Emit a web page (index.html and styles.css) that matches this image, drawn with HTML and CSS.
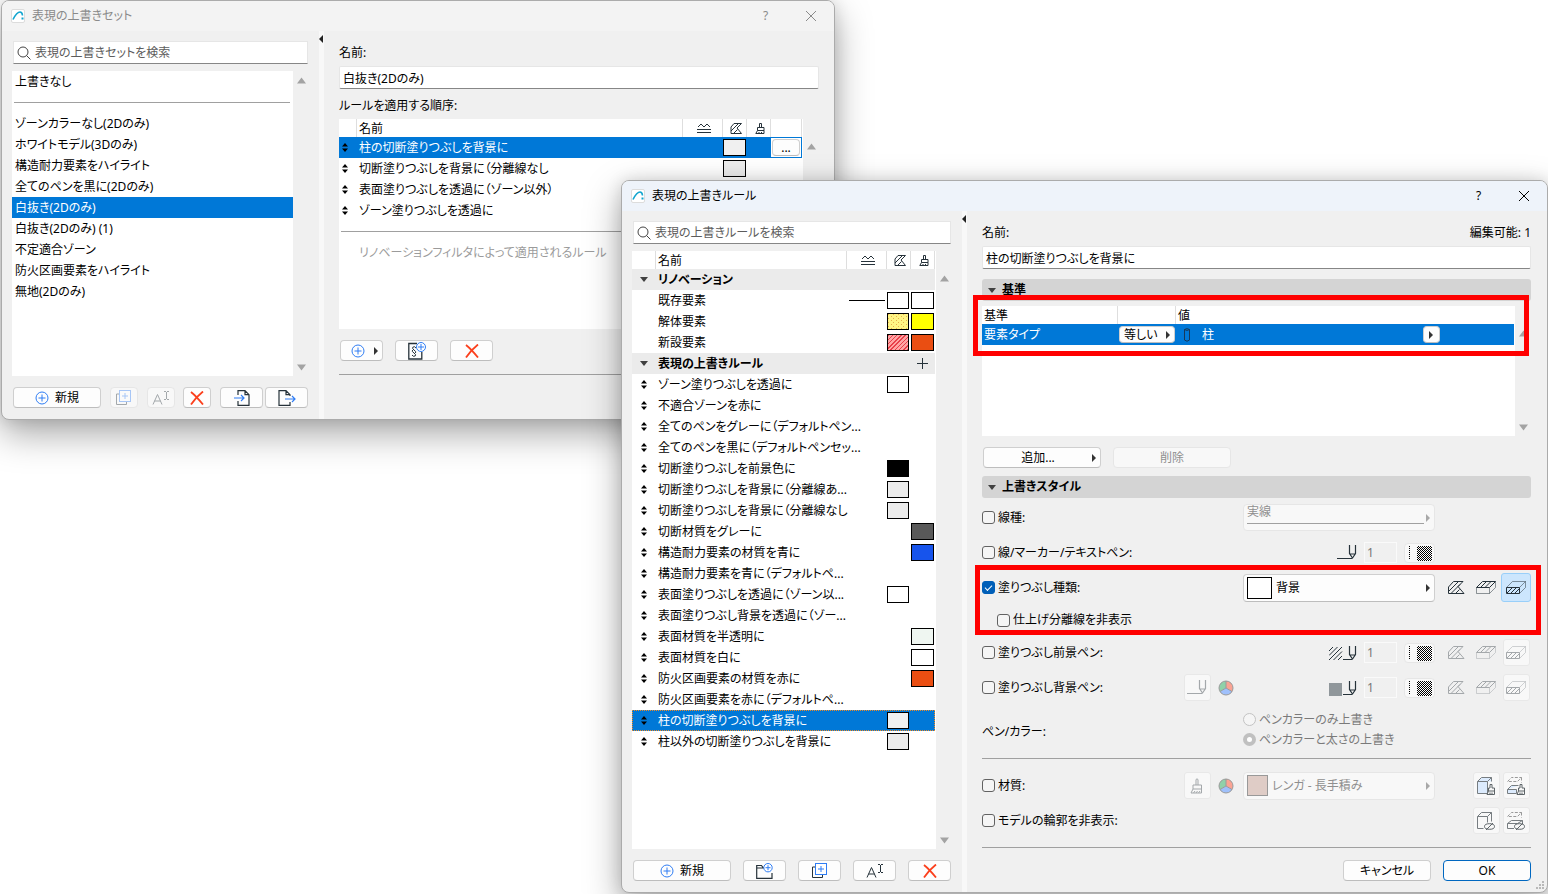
FILE: index.html
```html
<!DOCTYPE html>
<html lang="ja">
<head>
    <meta charset="UTF-8">
    <meta name="viewport" content="width=device-width, initial-scale=1.0">
    <title>表現の上書き</title>
    <link rel="stylesheet" href="styles.css">
</head>
<body>

    <!-- shared icons -->
    <svg class="sprite" aria-hidden="true">
        <defs>
            <pattern id="dots" width="5" height="4" patternUnits="userSpaceOnUse">
                <rect width="5" height="4" fill="#fff584"/>
                <path d="M0 0h1v1h-1zM3 2h1v1h-1z" fill="#eab04c"/>
            </pattern>
            <pattern id="check" width="2" height="2" patternUnits="userSpaceOnUse">
                <rect width="2" height="2" fill="#fff"/>
                <path d="M0 0h1v1h-1zM1 1h1v1h-1z" fill="#000"/>
            </pattern>
        </defs>
        <symbol id="logo" viewBox="0 0 14 14">
            <rect x=".5" y=".5" width="13" height="13" rx="1.5" fill="#fff" stroke="#dcdcdc"/>
            <path d="M2 10.500C4 6.500 6.500 3 9 3C10.500 3 11.300 4.500 11.500 6.500" fill="none" stroke="#12a5cf" stroke-width="1.600"/>
            <rect x="10.500" y="8.500" width="2" height="2" fill="#12a5cf"/>
        </symbol>
        <symbol id="close" viewBox="0 0 12 12"><path d="M1 1l10 10M11 1L1 11" fill="none" stroke="currentColor"/></symbol>
        <symbol id="search" viewBox="0 0 14 14"><circle cx="6" cy="6" r="5" fill="none" stroke="#444"/><path d="M9.500 9.500l4 4" stroke="#444"/></symbol>
        <symbol id="sort" viewBox="0 0 6 9"><path d="M0 3.500L3 0l3 3.500zM0 5.500L3 9l3-3.500z"/></symbol>
        <symbol id="up" viewBox="0 0 9 7"><path d="M0 6.500L4.500 .5 9 6.500z" fill="#a3a3a3"/></symbol>
        <symbol id="down" viewBox="0 0 9 7"><path d="M0 .5L4.500 6.500 9 .5z" fill="#a3a3a3"/></symbol>
        <symbol id="open" viewBox="0 0 8 5"><path d="M0 0h8L4 5z" fill="#404040"/></symbol>
        <symbol id="right" viewBox="0 0 4 8"><path d="M0 0l4 4-4 4z" fill="currentColor"/></symbol>
        <symbol id="left" viewBox="0 0 4 8"><path d="M4 0L0 4l4 4z" fill="#222"/></symbol>
        <symbol id="lines" viewBox="0 0 14 10"><path d="M1 4l3-3 3 3 3-3 3 3" fill="none" stroke="#26323a"/><path d="M0 6.500h14M0 9.500h14" stroke="#26323a"/></symbol>
        <symbol id="fill" viewBox="0 0 12 11"><path d="M1 10.500V4l3-3.500h7.500L7 5l4.500 5.500zM1 8l7-7M3.500 10.500l4-4" fill="none" stroke="#26323a"/></symbol>
        <symbol id="brush" viewBox="0 0 14 16"><path d="M6 7V1.500Q7 .2 8 1.500V7M3 7h8.500v4H3zM3 11l-2 4h10.500V11M3.500 15l1.500-2M6 15l1.500-2M8.500 15l1.500-2" fill="none" stroke="currentColor"/></symbol>
        <symbol id="brush-head" viewBox="0 0 10 11"><path d="M4.500 4.500V.5h2v4M2.500 4.500h6.500v3H2.500zM2.500 7.500L.8 10.500H9V7.500M4 10.500V9M6.500 10.500V9" fill="none" stroke="#26323a"/></symbol>
        <symbol id="plus" viewBox="0 0 14 14"><circle cx="7" cy="7" r="6" fill="none" stroke="#2f7df4"/><path d="M3.500 7h7M7 3.500v7" stroke="#2f7df4"/></symbol>
        <symbol id="copy" viewBox="0 0 15 15"><path d="M3 4H.5v10.500h10V12" fill="none" stroke="#26323a"/><rect x="3.500" y=".5" width="11" height="11" fill="#fff" stroke="#2f7df4"/><path d="M6 6h6M9 3v6" stroke="#2f7df4"/></symbol>
        <symbol id="rename" viewBox="0 0 17 14"><path d="M1 13.500L5.500 3.500 10 13.500M2.500 10h6M12 .5h2M15 .5h2M14.500 1v7M12 8.500h2M15 8.500h2" fill="none" stroke="#26323a"/></symbol>
        <symbol id="delete" viewBox="0 0 14 14"><path d="M1 1Q6 5 13 13.500M13 .5Q6 6 1 13.500" fill="none" stroke="#fb3f1c" stroke-width="1.800"/></symbol>
        <symbol id="import" viewBox="0 0 16 16"><path d="M4 5V.7h7L15 4.700v10.600H4V11M11 .7v4h4" fill="none" stroke="#26323a" stroke-width="1.200"/><path d="M0 8h10M7 5l3 3-3 3" fill="none" stroke="#2f7df4" stroke-width="1.200"/></symbol>
        <symbol id="export" viewBox="0 0 18 16"><path d="M12 6V4.700L8 .7H1v14.600h11V12M8 .7v4h4" fill="none" stroke="#26323a" stroke-width="1.200"/><path d="M7 9h10M14 6l3 3-3 3" fill="none" stroke="#2f7df4" stroke-width="1.200"/></symbol>
        <symbol id="section" viewBox="0 0 18 18"><path d="M9 1.500H.8v15.500h13V10" fill="none" stroke="#26323a" stroke-width="1.300"/><path d="M8 6Q6.500 3.800 4.800 5.200Q4 6.800 6 8Q8.500 9.500 7.500 11M4.500 8Q3.500 9.500 6 11Q8.500 12.500 7.200 14Q5 15 4 13" fill="none" stroke="#26323a"/><circle cx="13" cy="5" r="4.500" fill="#fff" stroke="#2f7df4"/><path d="M10 5h6M13 2v6" stroke="#2f7df4"/></symbol>
        <symbol id="folder" viewBox="0 0 17 16"><path d="M8 4.500H7L5.500 2.500H.7v12.800H16V10M.7 5H8" fill="none" stroke="#26323a" stroke-width="1.200"/><circle cx="12" cy="4.700" r="4.200" fill="#fff" stroke="#2f7df4"/><path d="M9.500 4.700h5M12 2.200v5" stroke="#2f7df4"/></symbol>
        <symbol id="add" viewBox="0 0 11 11"><path d="M0 5.500h11M5.500 0v11" stroke="#26323a"/></symbol>
        <symbol id="column" viewBox="0 0 6 14"><path d="M.5 1.500v10.500Q3 14.500 5.500 12V1.500Q3 -.2 .5 1.500Q3 3.500 5.500 1.500" fill="none" stroke="#17395a"/></symbol>
        <symbol id="pen" viewBox="0 0 20 15"><path d="M0 13.500h15M12.500 0v8.500L15.500 13l3-4.500V0M12.500 9h6" fill="none" stroke="currentColor" stroke-width="1.200"/></symbol>
        <symbol id="hatchpen" viewBox="0 0 28 16"><path d="M0 6l4-4M0 10.500L8.500 2M0 15L13 2M4.500 15L13 6.500M9 15l4-4" stroke="#26323a"/><path d="M14 14.500h9M20.500 1v8.500L23.500 14l3-4.500V1M20.500 10h6" fill="none" stroke="#26323a" stroke-width="1.200"/></symbol>
        <symbol id="solidpen" viewBox="0 0 28 16"><rect y="3" width="13" height="13" fill="#90979b"/><path d="M14 14.500h9M20.500 1v8.500L23.500 14l3-4.500V1M20.500 10h6" fill="none" stroke="#26323a" stroke-width="1.200"/></symbol>
        <symbol id="penset" viewBox="0 0 26 16"><path d="M2.500 1v14" stroke="#000" stroke-dasharray="1 1"/><rect x="10" y="1" width="15" height="15" fill="url(#check)"/></symbol>
        <symbol id="cutfill" viewBox="0 0 17 13"><path d="M.5 12.500V6l5-5.500H15L10 5.500l6 7zM.5 10.500l10-10M3 12.500l9-9M7.500 12.500l4-4" fill="none" stroke="currentColor"/></symbol>
        <symbol id="topfill" viewBox="0 0 20 13"><path d="M.5 6.500v6h13v-6M13.500 12.500l6-6v-6" fill="none" stroke="currentColor" opacity=".5"/><path d="M.5 6.500l6-6h13l-6 6zM4.500 6.500l6-6M9 6.500l6-6" fill="none" stroke="currentColor"/></symbol>
        <symbol id="frontfill" viewBox="0 0 20 13"><path d="M.5 6.500l6-6h13l-6 6M13.500 12.500l6-6v-6" fill="none" stroke="currentColor" opacity=".5"/><path d="M.5 6.500h13v6H.5zM1 12l5-5M5 12l5-5M9 12l4-4" fill="none" stroke="currentColor"/></symbol>
        <symbol id="wheel" viewBox="0 0 16 16"><path d="M8 8V1A7 7 0 0 0 2 11.500z" fill="#8fd1a9"/><path d="M8 8V1A7 7 0 0 1 14 11.500z" fill="#fba393"/><path d="M8 8L2 11.500A7 7 0 0 0 14 11.500z" fill="#9fc0fb"/><path d="M8 8V1M8 8L2 11.500M8 8l6 3.500" stroke="#9a9a9a"/><circle cx="8" cy="8" r="7" fill="none" stroke="#9a9a9a"/></symbol>
        <symbol id="boxbrush" viewBox="0 0 18 18"><path d="M.5 4.500l4-4h10v4M14.500 .5l-4 4H.5v12h10v-12" fill="#dcebfd" stroke="#777d81"/><path d="M13 11V7.500h2V11h2.500v3h-6v-3zM11.500 14l-1.500 3.500h7.500V14M13 17v-1.500M15 17v-1.500" fill="#f7f7f7" stroke="#5d6468"/></symbol>
        <symbol id="slabbrush" viewBox="0 0 18 18"><path d="M.5 4.500l4-4h10l-4 4zM14.500 .5v5" fill="none" stroke="#999" stroke-dasharray="3 1.500"/><path d="M.5 12.500l4-4h7M.5 12.500v4h9v-4z" fill="#dcebfd" stroke="#777d81"/><path d="M13 11V7.500h2V11h2.500v3h-6v-3zM11.500 14l-1.500 3.500h7.500V14M13 17v-1.500M15 17v-1.500" fill="#f7f7f7" stroke="#5d6468"/></symbol>
        <symbol id="boxhide" viewBox="0 0 18 18"><path d="M.5 4.500l4-4h10v9M14.500 .5l-4 4H.5v12h6M10.500 4.500v6" fill="none" stroke="#777d81"/><ellipse cx="12.500" cy="14.500" rx="5" ry="2.800" fill="none" stroke="#5d6468"/><path d="M9 18l7-7" stroke="#5d6468"/></symbol>
        <symbol id="slabhide" viewBox="0 0 18 18"><path d="M.5 4.500l4-4h10l-4 4zM14.500 .5v5" fill="none" stroke="#999" stroke-dasharray="3 1.500"/><path d="M7 16.500H.5v-5l4-3h11v3M.5 11.500h10l5-3" fill="none" stroke="#777d81"/><ellipse cx="12.500" cy="14.500" rx="5" ry="2.800" fill="none" stroke="#5d6468"/><path d="M9 18l7-7" stroke="#5d6468"/></symbol>
        <symbol id="grip" viewBox="0 0 8 8"><path d="M6 0h2v2H6zM3 3h2v2H3zM6 3h2v2H6zM0 6h2v2H0zM3 6h2v2H3zM6 6h2v2H6z" fill="#b8b8b8"/></symbol>
    </svg>

    <!-- override sets -->
    <div class="window window-sets">
        <div class="titlebar">
            <svg class="logo"><use href="#logo"/></svg>
            <span class="title">表現の上書きセット</span>
            <button class="title-btn" aria-label="ヘルプ">?</button>
            <button class="title-btn" aria-label="閉じる"><svg width="12" height="12"><use href="#close"/></svg></button>
        </div>
        <div class="window-body">
            <div class="left-pane">
                <label class="search">
                    <svg width="14" height="14"><use href="#search"/></svg>
                    <input type="text" placeholder="表現の上書きセットを検索" aria-label="検索">
                </label>
                <div class="list-area">
                    <ul class="list">
                        <li>上書きなし</li>
                        <li class="separator"><hr></li>
                        <li>ゾーンカラーなし(2Dのみ)</li>
                        <li>ホワイトモデル(3Dのみ)</li>
                        <li>構造耐力要素をハイライト</li>
                        <li>全てのペンを黒に(2Dのみ)</li>
                        <li class="selected">白抜き(2Dのみ)</li>
                        <li>白抜き(2Dのみ) (1)</li>
                        <li>不定適合ゾーン</li>
                        <li>防火区画要素をハイライト</li>
                        <li>無地(2Dのみ)</li>
                    </ul>
                    <div class="scroll">
                        <svg width="9" height="7"><use href="#up"/></svg>
                        <svg width="9" height="7"><use href="#down"/></svg>
                    </div>
                </div>
                <div class="buttons sets-buttons">
                    <button class="btn wide"><svg width="14" height="14"><use href="#plus"/></svg>新規</button>
                    <button class="btn small" disabled aria-label="複製"><svg width="15" height="15"><use href="#copy"/></svg></button>
                    <button class="btn small" disabled aria-label="名前の変更"><svg width="17" height="14"><use href="#rename"/></svg></button>
                    <button class="btn small" aria-label="削除"><svg width="14" height="14"><use href="#delete"/></svg></button>
                    <div class="pair">
                        <button class="btn" aria-label="読み込み"><svg width="16" height="16"><use href="#import"/></svg></button>
                        <button class="btn" aria-label="書き出し"><svg width="18" height="16"><use href="#export"/></svg></button>
                    </div>
                </div>
            </div>
            <div class="splitter"><svg width="4" height="8"><use href="#left"/></svg></div>
            <div class="right-pane">
                <label class="field-label" for="set-name">名前:</label>
                <input class="text-input" type="text" id="set-name" value="白抜き(2Dのみ)">
                <div class="order-label">ルールを適用する順序:</div>
                <div class="list-area">
                    <div class="list">
                        <table class="rules order">
                            <thead>
                                <tr>
                                    <th class="c-sort"></th>
                                    <th class="c-name">名前</th>
                                    <th class="c-line"><svg width="14" height="10"><use href="#lines"/></svg></th>
                                    <th class="c-fill"><svg width="12" height="11"><use href="#fill"/></svg></th>
                                    <th class="c-mat"><svg width="10" height="11"><use href="#brush-head"/></svg></th>
                                    <th class="c-more"></th>
                                </tr>
                            </thead>
                            <tbody>
                                <tr class="selected"><td><svg class="sort"><use href="#sort"/></svg></td><td>柱の切断塗りつぶしを背景に</td><td></td><td><i class="swatch sw-bg"></i></td><td></td><td class="more"><button class="btn">...</button></td></tr>
                                <tr><td><svg class="sort"><use href="#sort"/></svg></td><td>切断塗りつぶしを背景に（分離線なし</td><td></td><td><i class="swatch sw-gray"></i></td><td></td><td></td></tr>
                                <tr><td><svg class="sort"><use href="#sort"/></svg></td><td>表面塗りつぶしを透過に（ゾーン以外）</td><td></td><td></td><td></td><td></td></tr>
                                <tr><td><svg class="sort"><use href="#sort"/></svg></td><td>ゾーン塗りつぶしを透過に</td><td></td><td></td><td></td><td></td></tr>
                                <tr class="separator"><td colspan="6"><hr></td></tr>
                                <tr class="muted"><td></td><td colspan="5">リノベーションフィルタによって適用されるルール</td></tr>
                            </tbody>
                        </table>
                    </div>
                    <div class="scroll below-head">
                        <svg width="9" height="7"><use href="#up"/></svg>
                    </div>
                </div>
                <div class="buttons">
                    <button class="btn has-arrow" aria-label="追加"><svg width="14" height="14"><use href="#plus"/></svg><svg class="arrow"><use href="#right"/></svg></button>
                    <button class="btn" aria-label="条件を追加"><svg width="18" height="18"><use href="#section"/></svg></button>
                    <button class="btn" aria-label="削除"><svg width="14" height="14"><use href="#delete"/></svg></button>
                </div>
                <hr class="rule-line">
            </div>
        </div>
    </div>

    <!-- override rules -->
    <div class="window window-rules active">
        <div class="titlebar">
            <svg class="logo"><use href="#logo"/></svg>
            <span class="title">表現の上書きルール</span>
            <button class="title-btn" aria-label="ヘルプ">?</button>
            <button class="title-btn" aria-label="閉じる"><svg width="12" height="12"><use href="#close"/></svg></button>
        </div>
        <div class="window-body">
            <div class="left-pane">
                <label class="search">
                    <svg width="14" height="14"><use href="#search"/></svg>
                    <input type="text" placeholder="表現の上書きルールを検索" aria-label="検索">
                </label>
                <div class="list-area">
                    <div class="list">
                        <table class="rules">
                            <thead>
                                <tr>
                                    <th class="c-sort"></th>
                                    <th class="c-name">名前</th>
                                    <th class="c-line"><svg width="14" height="10"><use href="#lines"/></svg></th>
                                    <th class="c-fill"><svg width="12" height="11"><use href="#fill"/></svg></th>
                                    <th class="c-mat"><svg width="10" height="11"><use href="#brush-head"/></svg></th>
                                </tr>
                            </thead>
                            <tbody>
                                <tr class="group"><td><svg class="open"><use href="#open"/></svg></td><td colspan="4">リノベーション</td></tr>
                                <tr><td></td><td>既存要素</td><td><i class="line-sample"></i></td><td><i class="swatch"></i></td><td><i class="swatch"></i></td></tr>
                                <tr><td></td><td>解体要素</td><td></td><td><svg class="swatch"><rect width="100%" height="100%" fill="url(#dots)"/></svg></td><td><i class="swatch sw-yellow"></i></td></tr>
                                <tr><td></td><td>新設要素</td><td></td><td><i class="swatch sw-hatch"></i></td><td><i class="swatch sw-orange"></i></td></tr>
                                <tr class="group"><td><svg class="open"><use href="#open"/></svg></td><td colspan="3">表現の上書きルール</td><td class="add"><button aria-label="ルールを追加"><svg width="11" height="11"><use href="#add"/></svg></button></td></tr>
                                <tr><td><svg class="sort"><use href="#sort"/></svg></td><td>ゾーン塗りつぶしを透過に</td><td></td><td><i class="swatch"></i></td><td></td></tr>
                                <tr><td><svg class="sort"><use href="#sort"/></svg></td><td>不適合ゾーンを赤に</td><td></td><td></td><td></td></tr>
                                <tr><td><svg class="sort"><use href="#sort"/></svg></td><td>全てのペンをグレーに（デフォルトペン...</td><td></td><td></td><td></td></tr>
                                <tr><td><svg class="sort"><use href="#sort"/></svg></td><td>全てのペンを黒に（デフォルトペンセッ...</td><td></td><td></td><td></td></tr>
                                <tr><td><svg class="sort"><use href="#sort"/></svg></td><td>切断塗りつぶしを前景色に</td><td></td><td><i class="swatch sw-black"></i></td><td></td></tr>
                                <tr><td><svg class="sort"><use href="#sort"/></svg></td><td>切断塗りつぶしを背景に（分離線あ...</td><td></td><td><i class="swatch sw-gray"></i></td><td></td></tr>
                                <tr><td><svg class="sort"><use href="#sort"/></svg></td><td>切断塗りつぶしを背景に（分離線なし</td><td></td><td><i class="swatch sw-gray"></i></td><td></td></tr>
                                <tr><td><svg class="sort"><use href="#sort"/></svg></td><td>切断材質をグレーに</td><td></td><td></td><td><i class="swatch sw-dark"></i></td></tr>
                                <tr><td><svg class="sort"><use href="#sort"/></svg></td><td>構造耐力要素の材質を青に</td><td></td><td></td><td><i class="swatch sw-blue"></i></td></tr>
                                <tr><td><svg class="sort"><use href="#sort"/></svg></td><td>構造耐力要素を青に（デフォルトペ...</td><td></td><td></td><td></td></tr>
                                <tr><td><svg class="sort"><use href="#sort"/></svg></td><td>表面塗りつぶしを透過に（ゾーン以...</td><td></td><td><i class="swatch"></i></td><td></td></tr>
                                <tr><td><svg class="sort"><use href="#sort"/></svg></td><td>表面塗りつぶし背景を透過に（ゾー...</td><td></td><td></td><td></td></tr>
                                <tr><td><svg class="sort"><use href="#sort"/></svg></td><td>表面材質を半透明に</td><td></td><td></td><td><i class="swatch sw-mint"></i></td></tr>
                                <tr><td><svg class="sort"><use href="#sort"/></svg></td><td>表面材質を白に</td><td></td><td></td><td><i class="swatch"></i></td></tr>
                                <tr><td><svg class="sort"><use href="#sort"/></svg></td><td>防火区画要素の材質を赤に</td><td></td><td></td><td><i class="swatch sw-orange"></i></td></tr>
                                <tr><td><svg class="sort"><use href="#sort"/></svg></td><td>防火区画要素を赤に（デフォルトペ...</td><td></td><td></td><td></td></tr>
                                <tr class="selected focused"><td><svg class="sort"><use href="#sort"/></svg></td><td>柱の切断塗りつぶしを背景に</td><td></td><td><i class="swatch sw-bg"></i></td><td></td></tr>
                                <tr><td><svg class="sort"><use href="#sort"/></svg></td><td>柱以外の切断塗りつぶしを背景に</td><td></td><td><i class="swatch sw-gray"></i></td><td></td></tr>
                            </tbody>
                        </table>
                    </div>
                    <div class="scroll below-head">
                        <svg width="9" height="7"><use href="#up"/></svg>
                        <svg width="9" height="7"><use href="#down"/></svg>
                    </div>
                </div>
                <div class="buttons">
                    <button class="btn grow"><svg width="14" height="14"><use href="#plus"/></svg>新規</button>
                    <button class="btn" aria-label="新規フォルダ"><svg width="17" height="16"><use href="#folder"/></svg></button>
                    <button class="btn" aria-label="複製"><svg width="15" height="15"><use href="#copy"/></svg></button>
                    <button class="btn" aria-label="名前の変更"><svg width="17" height="14"><use href="#rename"/></svg></button>
                    <button class="btn" aria-label="削除"><svg width="14" height="14"><use href="#delete"/></svg></button>
                </div>
            </div>
            <div class="splitter"><svg width="4" height="8"><use href="#left"/></svg></div>
            <div class="right-pane">
                <div class="name-row">
                    <label class="field-label" for="rule-name">名前:</label>
                    <span>編集可能: 1</span>
                </div>
                <input class="text-input" type="text" id="rule-name" value="柱の切断塗りつぶしを背景に">

                <h2 class="section-head"><svg class="open"><use href="#open"/></svg>基準</h2>
                <div class="list-area criteria">
                    <div class="list">
                        <table class="rules">
                            <thead>
                                <tr><th class="c-crit">基準</th><th class="c-op"></th><th class="c-name">値</th></tr>
                            </thead>
                            <tbody>
                                <tr class="selected">
                                    <td>要素タイプ</td>
                                    <td><div class="select op-select"><select aria-label="条件"><option>等しい</option></select><svg class="arrow"><use href="#right"/></svg></div></td>
                                    <td>
                                        <div class="value-cell">
                                            <svg width="6" height="14"><use href="#column"/></svg>
                                            <span>柱</span>
                                            <button class="btn pick" aria-label="値を選択"><svg class="arrow"><use href="#right"/></svg></button>
                                        </div>
                                    </td>
                                </tr>
                            </tbody>
                        </table>
                    </div>
                    <div class="scroll below-head">
                        <svg width="9" height="7"><use href="#up"/></svg>
                        <svg width="9" height="7"><use href="#down"/></svg>
                    </div>
                    <div class="highlight"></div>
                </div>
                <div class="buttons criteria-buttons">
                    <button class="btn has-arrow">追加...<svg class="arrow"><use href="#right"/></svg></button>
                    <button class="btn" disabled>削除</button>
                </div>

                <h2 class="section-head"><svg class="open"><use href="#open"/></svg>上書きスタイル</h2>
                <div class="style-rows">
                    <div class="style-row">
                        <label><input type="checkbox">線種:</label>
                        <div class="select line-select c-main disabled"><select disabled aria-label="線種"><option>実線</option></select><svg class="arrow"><use href="#right"/></svg></div>
                    </div>
                    <div class="style-row">
                        <label><input type="checkbox">線/マーカー/テキストペン:</label>
                        <div class="pen-set c-main">
                            <svg width="20" height="15"><use href="#pen"/></svg>
                            <input type="text" value="1" disabled aria-label="ペン番号">
                            <button class="btn soft" disabled aria-label="ペンを選択"><svg width="26" height="16"><use href="#penset"/></svg></button>
                        </div>
                    </div>
                    <div class="fill-type">
                        <div class="style-row">
                            <label><input type="checkbox" checked>塗りつぶし種類:</label>
                            <div class="select fill-select c-main"><i class="sample"></i><select aria-label="塗りつぶし種類"><option>背景</option></select><svg class="arrow"><use href="#right"/></svg></div>
                            <button class="tool" aria-label="切断"><svg width="17" height="13"><use href="#cutfill"/></svg></button>
                            <button class="tool" aria-label="表面"><svg width="20" height="13"><use href="#topfill"/></svg></button>
                            <button class="tool on" aria-label="作図"><svg width="20" height="13"><use href="#frontfill"/></svg></button>
                        </div>
                        <div class="style-row sub">
                            <label><input type="checkbox">仕上げ分離線を非表示</label>
                        </div>
                        <div class="highlight"></div>
                    </div>
                    <div class="style-row">
                        <label><input type="checkbox">塗りつぶし前景ペン:</label>
                        <div class="pen-set c-main">
                            <svg width="28" height="16"><use href="#hatchpen"/></svg>
                            <input type="text" value="1" disabled aria-label="ペン番号">
                            <button class="btn soft" disabled aria-label="ペンを選択"><svg width="26" height="16"><use href="#penset"/></svg></button>
                        </div>
                        <button class="tool" disabled aria-label="切断"><svg width="17" height="13"><use href="#cutfill"/></svg></button>
                        <button class="tool" disabled aria-label="表面"><svg width="20" height="13"><use href="#topfill"/></svg></button>
                        <button class="tool boxed" disabled aria-label="作図"><svg width="20" height="13"><use href="#frontfill"/></svg></button>
                    </div>
                    <div class="style-row">
                        <label><input type="checkbox">塗りつぶし背景ペン:</label>
                        <button class="tool boxed" disabled aria-label="ペン"><svg width="20" height="15"><use href="#pen"/></svg></button>
                        <svg class="wheel"><use href="#wheel"/></svg>
                        <div class="pen-set c-main">
                            <svg width="28" height="16"><use href="#solidpen"/></svg>
                            <input type="text" value="1" disabled aria-label="ペン番号">
                            <button class="btn soft" disabled aria-label="ペンを選択"><svg width="26" height="16"><use href="#penset"/></svg></button>
                        </div>
                        <button class="tool" disabled aria-label="切断"><svg width="17" height="13"><use href="#cutfill"/></svg></button>
                        <button class="tool" disabled aria-label="表面"><svg width="20" height="13"><use href="#topfill"/></svg></button>
                        <button class="tool boxed" disabled aria-label="作図"><svg width="20" height="13"><use href="#frontfill"/></svg></button>
                    </div>
                    <div class="style-row pen-color">
                        <span>ペン/カラー:</span>
                        <div class="radios c-main">
                            <label><input type="radio" name="pen-color" disabled>ペンカラーのみ上書き</label>
                            <label><input type="radio" name="pen-color" disabled checked>ペンカラーと太さの上書き</label>
                        </div>
                    </div>
                    <hr class="rule-line">
                    <div class="style-row">
                        <label><input type="checkbox">材質:</label>
                        <button class="tool boxed" disabled aria-label="材質"><svg width="14" height="16"><use href="#brush"/></svg></button>
                        <svg class="wheel"><use href="#wheel"/></svg>
                        <div class="select mat-select c-main disabled"><i class="sample"></i><select disabled aria-label="材質"><option>レンガ - 長手積み</option></select><svg class="arrow"><use href="#right"/></svg></div>
                        <button class="tool boxed c-second" disabled aria-label="表面の材質"><svg width="18" height="18"><use href="#boxbrush"/></svg></button>
                        <button class="tool boxed" disabled aria-label="切断面の材質"><svg width="18" height="18"><use href="#slabbrush"/></svg></button>
                    </div>
                    <div class="style-row">
                        <label><input type="checkbox">モデルの輪郭を非表示:</label>
                        <button class="tool boxed c-second" disabled aria-label="表面の輪郭"><svg width="18" height="18"><use href="#boxhide"/></svg></button>
                        <button class="tool boxed" disabled aria-label="切断面の輪郭"><svg width="18" height="18"><use href="#slabhide"/></svg></button>
                    </div>
                    <hr class="rule-line">
                </div>
                <div class="dialog-buttons">
                    <button class="btn">キャンセル</button>
                    <button class="btn default">OK</button>
                </div>
            </div>
        </div>
        <svg class="grip"><use href="#grip"/></svg>
    </div>

</body>
</html>
```
FILE: styles.css
```css
*, *::before, *::after {
    box-sizing: border-box;
}

body {
    margin: 0;
    min-height: 100vh;
    position: relative;
    overflow: hidden;
    background-color: #fff;
    color: #000;
    font-family: "Noto Sans", "Noto Sans CJK JP", sans-serif;
    font-feature-settings: "palt";
    font-size: 12px;
    line-height: 18px;
}

.sprite {
    position: absolute;
    width: 0;
    height: 0;
}

svg {
    display: block;
    flex: none;
}

button, input, select {
    font: inherit;
    font-feature-settings: inherit;
    color: inherit;
}

button {
    padding: 0;
    border: none;
    background: none;
}

hr {
    margin: 0;
    border: none;
    border-top: 1px solid #a0a0a0;
}

/* windows */
.window {
    position: absolute;
    background-color: #f0f0f0;
    border: 1px solid #ababab;
    border-radius: 8px;
    box-shadow: 0 14px 36px rgba(0, 0, 0, 0.34), 0 0 16px rgba(0, 0, 0, 0.12);
}

.window-sets {
    top: 0;
    left: 1px;
    width: 834px;
}

.window-rules {
    top: 180px;
    left: 621px;
    right: 0;
}

.titlebar {
    display: flex;
    align-items: center;
    height: 30px;
    padding: 0 1px 0 9px;
    background-color: #f3f3f3;
    border-radius: 7px 7px 0 0;
    color: #8a8a8a;
}

.active .titlebar {
    background-color: #eef3fa;
    color: #000;
}

.logo {
    width: 14px;
    height: 14px;
    margin-right: 7px;
}

.title {
    flex: 1;
}

.title-btn {
    display: flex;
    align-items: center;
    justify-content: center;
    width: 45px;
    height: 30px;
}

.window-body {
    display: flex;
}

.left-pane {
    display: flex;
    flex-direction: column;
    padding: 10px 10px 11px;
}

.window-sets .left-pane {
    width: 317px;
}

.window-rules .left-pane {
    width: 340px;
}

.splitter {
    width: 5px;
    padding-top: 4px;
    background-color: #f8f8f8;
}

.right-pane {
    flex: 1;
    min-width: 0;
    padding: 13px 15px 11px;
}

.window-rules .right-pane {
    padding-right: 16px;
}

/* fields */
.search {
    display: flex;
    align-items: center;
    gap: 4px;
    height: 23px;
    margin: 0 1px 7px;
    padding: 0 3px;
    background-color: #fff;
    border: 1px solid #e6e6e6;
    border-bottom-color: #868686;
}

.search input {
    flex: 1;
    min-width: 0;
    padding: 0;
    border: none;
    outline: none;
    background: none;
}

.search input::placeholder {
    color: #5c5c5c;
}

.field-label {
    display: block;
}

.text-input {
    display: block;
    width: 100%;
    height: 23px;
    margin-top: 4px;
    padding: 0 3px;
    background-color: #fff;
    border: 1px solid #e6e6e6;
    border-bottom-color: #868686;
    border-radius: 2px;
}

.name-row {
    display: flex;
    justify-content: space-between;
}

.order-label {
    margin: 8px 0 4px;
}

/* lists */
.list-area {
    display: flex;
    flex: 1;
}

.list {
    flex: 1;
    min-width: 0;
    margin: 0;
    padding: 0;
    background-color: #fff;
    list-style: none;
}

.window-sets .left-pane .list {
    min-height: 305px;
}

.window-sets .right-pane .list {
    min-height: 210px;
}

ul.list li {
    height: 21px;
    padding: 0 3px;
    line-height: 21px;
}

ul.list .separator {
    padding: 10px 3px 0 2px;
}

.selected {
    background-color: #0078d7;
    color: #fff;
}

.scroll {
    display: flex;
    flex-direction: column;
    align-items: center;
    justify-content: space-between;
    width: 16px;
    padding: 6px 0 5px;
}

.scroll.below-head {
    padding-top: 24px;
}

.rules {
    width: calc(100% - 1px);
    table-layout: fixed;
    border-collapse: separate;
    border-spacing: 0;
    text-align: left;
}

.rules th {
    height: 18px;
    padding: 0 2px;
    border-right: 1px solid #dedede;
    font-weight: normal;
    line-height: 17px;
}

.rules th svg {
    margin: 0 auto;
}

.rules td {
    height: 21px;
    padding: 0 2px;
    line-height: 20px;
    white-space: nowrap;
}

.c-sort {
    width: 24px;
}

.order .c-sort {
    width: 18px;
}

.c-line {
    width: 40px;
}

.c-fill, .c-mat {
    width: 24px;
}

.rules .c-line, .rules .c-fill, .rules .c-mat {
    padding: 0 0 0 3px;
}

.c-more {
    width: 31px;
}

.rules td:has(.swatch), .rules td:has(.sort), .rules td:has(.open) {
    padding: 0;
}

.sort {
    width: 6px;
    height: 9px;
    margin-left: 9px;
    color: #000;
}

.order .sort {
    margin-left: 3px;
}

.open {
    width: 8px;
    height: 5px;
    margin-left: 8px;
}

.swatch {
    display: block;
    width: 22px;
    height: 17px;
    border: 1px solid #000;
    background-color: #fff;
}

.rules td:last-child .swatch, .order .swatch {
    width: 23px;
}

.sw-bg {
    background-color: #f0f0f0;
}

.sw-gray {
    background-color: #ececec;
}

.sw-black {
    background-color: #000;
}

.sw-dark {
    background-color: #595959;
}

.sw-blue {
    background-color: #1754ec;
}

.sw-yellow {
    background-color: #ff0;
}

.sw-orange {
    background-color: #ea4e12;
}

.sw-mint {
    background-color: #eff6f1;
}

.sw-hatch {
    background: repeating-linear-gradient(135deg, #e8404a 0 1px, #ffa5a5 1px 3px);
}

.line-sample {
    display: block;
    height: 1px;
    background-color: #000;
}

.group {
    background-color: #ebebeb;
    font-weight: bold;
}

.group .add button {
    display: block;
    margin-left: 4px;
}

.focused {
    outline: 1px dotted #f08a24;
    outline-offset: -1px;
}

.rules .muted {
    color: #9b9b9b;
}

.rules .more {
    padding: 1px;
    background-color: #fff;
    border: 1px solid #0078d7;
    border-left: none;
}

.more .btn {
    width: 28px;
    height: 17px;
}

/* buttons */
.buttons {
    display: flex;
    gap: 12px;
    margin: 11px 1px 0;
}

.btn {
    position: relative;
    display: flex;
    align-items: center;
    justify-content: center;
    gap: 6px;
    width: 43px;
    height: 21px;
    background-color: #fdfdfd;
    border: 1px solid #cfcfcf;
    border-bottom-color: #bdbdbd;
    border-radius: 4px;
    color: #000;
}

.btn:disabled {
    border-color: #e6e6e6;
    background-color: #f8f8f8;
    color: #8f8f8f;
}

.btn:disabled svg {
    opacity: 0.4;
}

.btn.wide {
    width: 88px;
}

.btn.small {
    width: 28px;
}

.btn.grow {
    flex: 1;
}

.sets-buttons {
    gap: 0;
    justify-content: space-between;
}

.pair {
    display: flex;
    gap: 2px;
}

.arrow {
    position: absolute;
    right: 4px;
    top: calc(50% - 4px);
    width: 4px;
    height: 8px;
    color: #333;
    pointer-events: none;
}

.has-arrow {
    padding-right: 8px;
}

.rule-line {
    margin-top: 13px;
}

/* rule settings */
.section-head {
    display: flex;
    align-items: center;
    gap: 6px;
    height: 22px;
    margin: 10px 0 5px;
    background-color: #d4d4d4;
    border-radius: 3px;
    font-size: 12px;
    font-weight: bold;
}

.section-head .open {
    margin-left: 6px;
}

.criteria {
    position: relative;
    height: 130px;
}

.c-crit {
    width: 136px;
}

.c-op {
    width: 58px;
}

.criteria .rules th:last-child {
    border-right: none;
}

.criteria .rules td:nth-child(2) {
    padding: 0 1px;
}

.highlight {
    position: absolute;
    border: 5px solid #f00;
    pointer-events: none;
}

.criteria .highlight {
    top: -11px;
    left: -9px;
    right: 2px;
    height: 61px;
}

.select {
    position: relative;
    display: flex;
    align-items: center;
    background-color: #fdfdfd;
    border: 1px solid #cfcfcf;
    border-bottom-color: #bdbdbd;
    border-radius: 4px;
    color: #000;
}

.select select {
    flex: 1;
    min-width: 0;
    padding: 0 14px 0 4px;
    border: none;
    outline: none;
    background: none;
    appearance: none;
}

.select.disabled {
    background-color: #f8f8f8;
    border-color: #e6e6e6;
    color: #8f8f8f;
}

.select select:disabled {
    opacity: 1;
}

.disabled .arrow {
    color: #a8a8a8;
}

.op-select {
    height: 17px;
}

.value-cell {
    display: flex;
    align-items: center;
    padding-left: 6px;
}

.value-cell span {
    width: 233px;
    padding-left: 12px;
}

.pick {
    width: 17px;
    height: 17px;
}

.pick .arrow {
    right: 6px;
}

.criteria-buttons .btn {
    width: 118px;
}

.criteria-buttons + .section-head {
    margin: 8px 0 2px;
}

.style-row {
    display: grid;
    grid-template-columns: 1fr 28px 32px 198px 30px 30px 30px;
    align-items: center;
    height: 35px;
}

.style-row label, .radios label {
    display: flex;
    align-items: center;
    gap: 3px;
}

.c-main {
    grid-column: 4;
    width: 192px;
}

.c-second {
    grid-column: 6;
}

.style-row > .tool:last-child {
    grid-column: 7;
}

input[type="checkbox"], input[type="radio"] {
    appearance: none;
    display: grid;
    place-items: center;
    width: 13px;
    height: 13px;
    margin: 0;
    background-color: #f5f5f5;
    border: 1px solid #626262;
    border-radius: 3px;
}

input[type="checkbox"]:checked {
    background-color: #005fb8;
    border-color: #005fb8;
}

input[type="checkbox"]:checked::before {
    content: "";
    width: 7px;
    height: 4px;
    margin-bottom: 2px;
    border-left: 1px solid #fff;
    border-bottom: 1px solid #fff;
    transform: rotate(-45deg);
}

input[type="radio"] {
    border-color: #c3c3c3;
    border-radius: 50%;
}

input[type="radio"]:checked {
    background-color: #fff;
    border: 4px solid #c0c0c0;
}

.line-select {
    height: 27px;
}

.line-select select {
    height: 19px;
    margin: 0 10px 6px 3px;
    padding: 0 0 4px;
    border-bottom: 1px solid #a0a0a0;
    line-height: 14px;
}

.fill-select, .mat-select {
    height: 28px;
    padding-left: 3px;
}

.sample {
    width: 25px;
    height: 22px;
    background-color: #fff;
    border: 1px solid #000;
}

.mat-select .sample {
    width: 21px;
    height: 21px;
    background-color: #dfccc6;
    border-color: #999;
}

.pen-set {
    display: flex;
    align-items: center;
    justify-content: flex-end;
    gap: 7px;
    color: #26323a;
}

.pen-set input {
    width: 33px;
    height: 21px;
    padding: 0 2px;
    background-color: #f0f0f0;
    border: 1px solid #fafafa;
    color: #777;
}

.pen-set .btn {
    width: 31px;
    height: 20px;
}

.pen-set .btn svg {
    opacity: 1;
}

.tool {
    display: flex;
    align-items: center;
    justify-content: center;
    width: 30px;
    height: 29px;
    border: 1px solid transparent;
    border-radius: 3px;
    color: #26323a;
}

.tool.on {
    background-color: #cce6fd;
    border-color: #99cff9;
}

.tool:disabled {
    color: #a4a8ab;
}

.tool.boxed {
    width: 27px;
    height: 27px;
    margin: 0 auto;
    background-color: #f8f8f8;
    border-color: #e8e8e8;
}

.wheel {
    width: 16px;
    height: 16px;
    margin-left: 7px;
}

.fill-type {
    position: relative;
}

.fill-type .highlight {
    top: -5px;
    bottom: 0;
    left: -7px;
    right: -10px;
}

.style-row.sub {
    height: 30px;
    padding-left: 15px;
}

.style-row.pen-color {
    height: 53px;
}

.radios {
    display: flex;
    flex-direction: column;
    gap: 2px;
    padding-bottom: 4px;
    color: #7a7a7a;
}

.style-rows .rule-line {
    margin: 0 0 9px;
}

.style-rows .rule-line:last-child {
    margin: 9px 0 12px;
}

.dialog-buttons {
    display: flex;
    justify-content: flex-end;
    gap: 12px;
}

.dialog-buttons .btn {
    width: 88px;
}

.btn.default {
    border-color: #0067c0;
}

.grip {
    position: absolute;
    right: 3px;
    bottom: 3px;
    width: 8px;
    height: 8px;
}
```
